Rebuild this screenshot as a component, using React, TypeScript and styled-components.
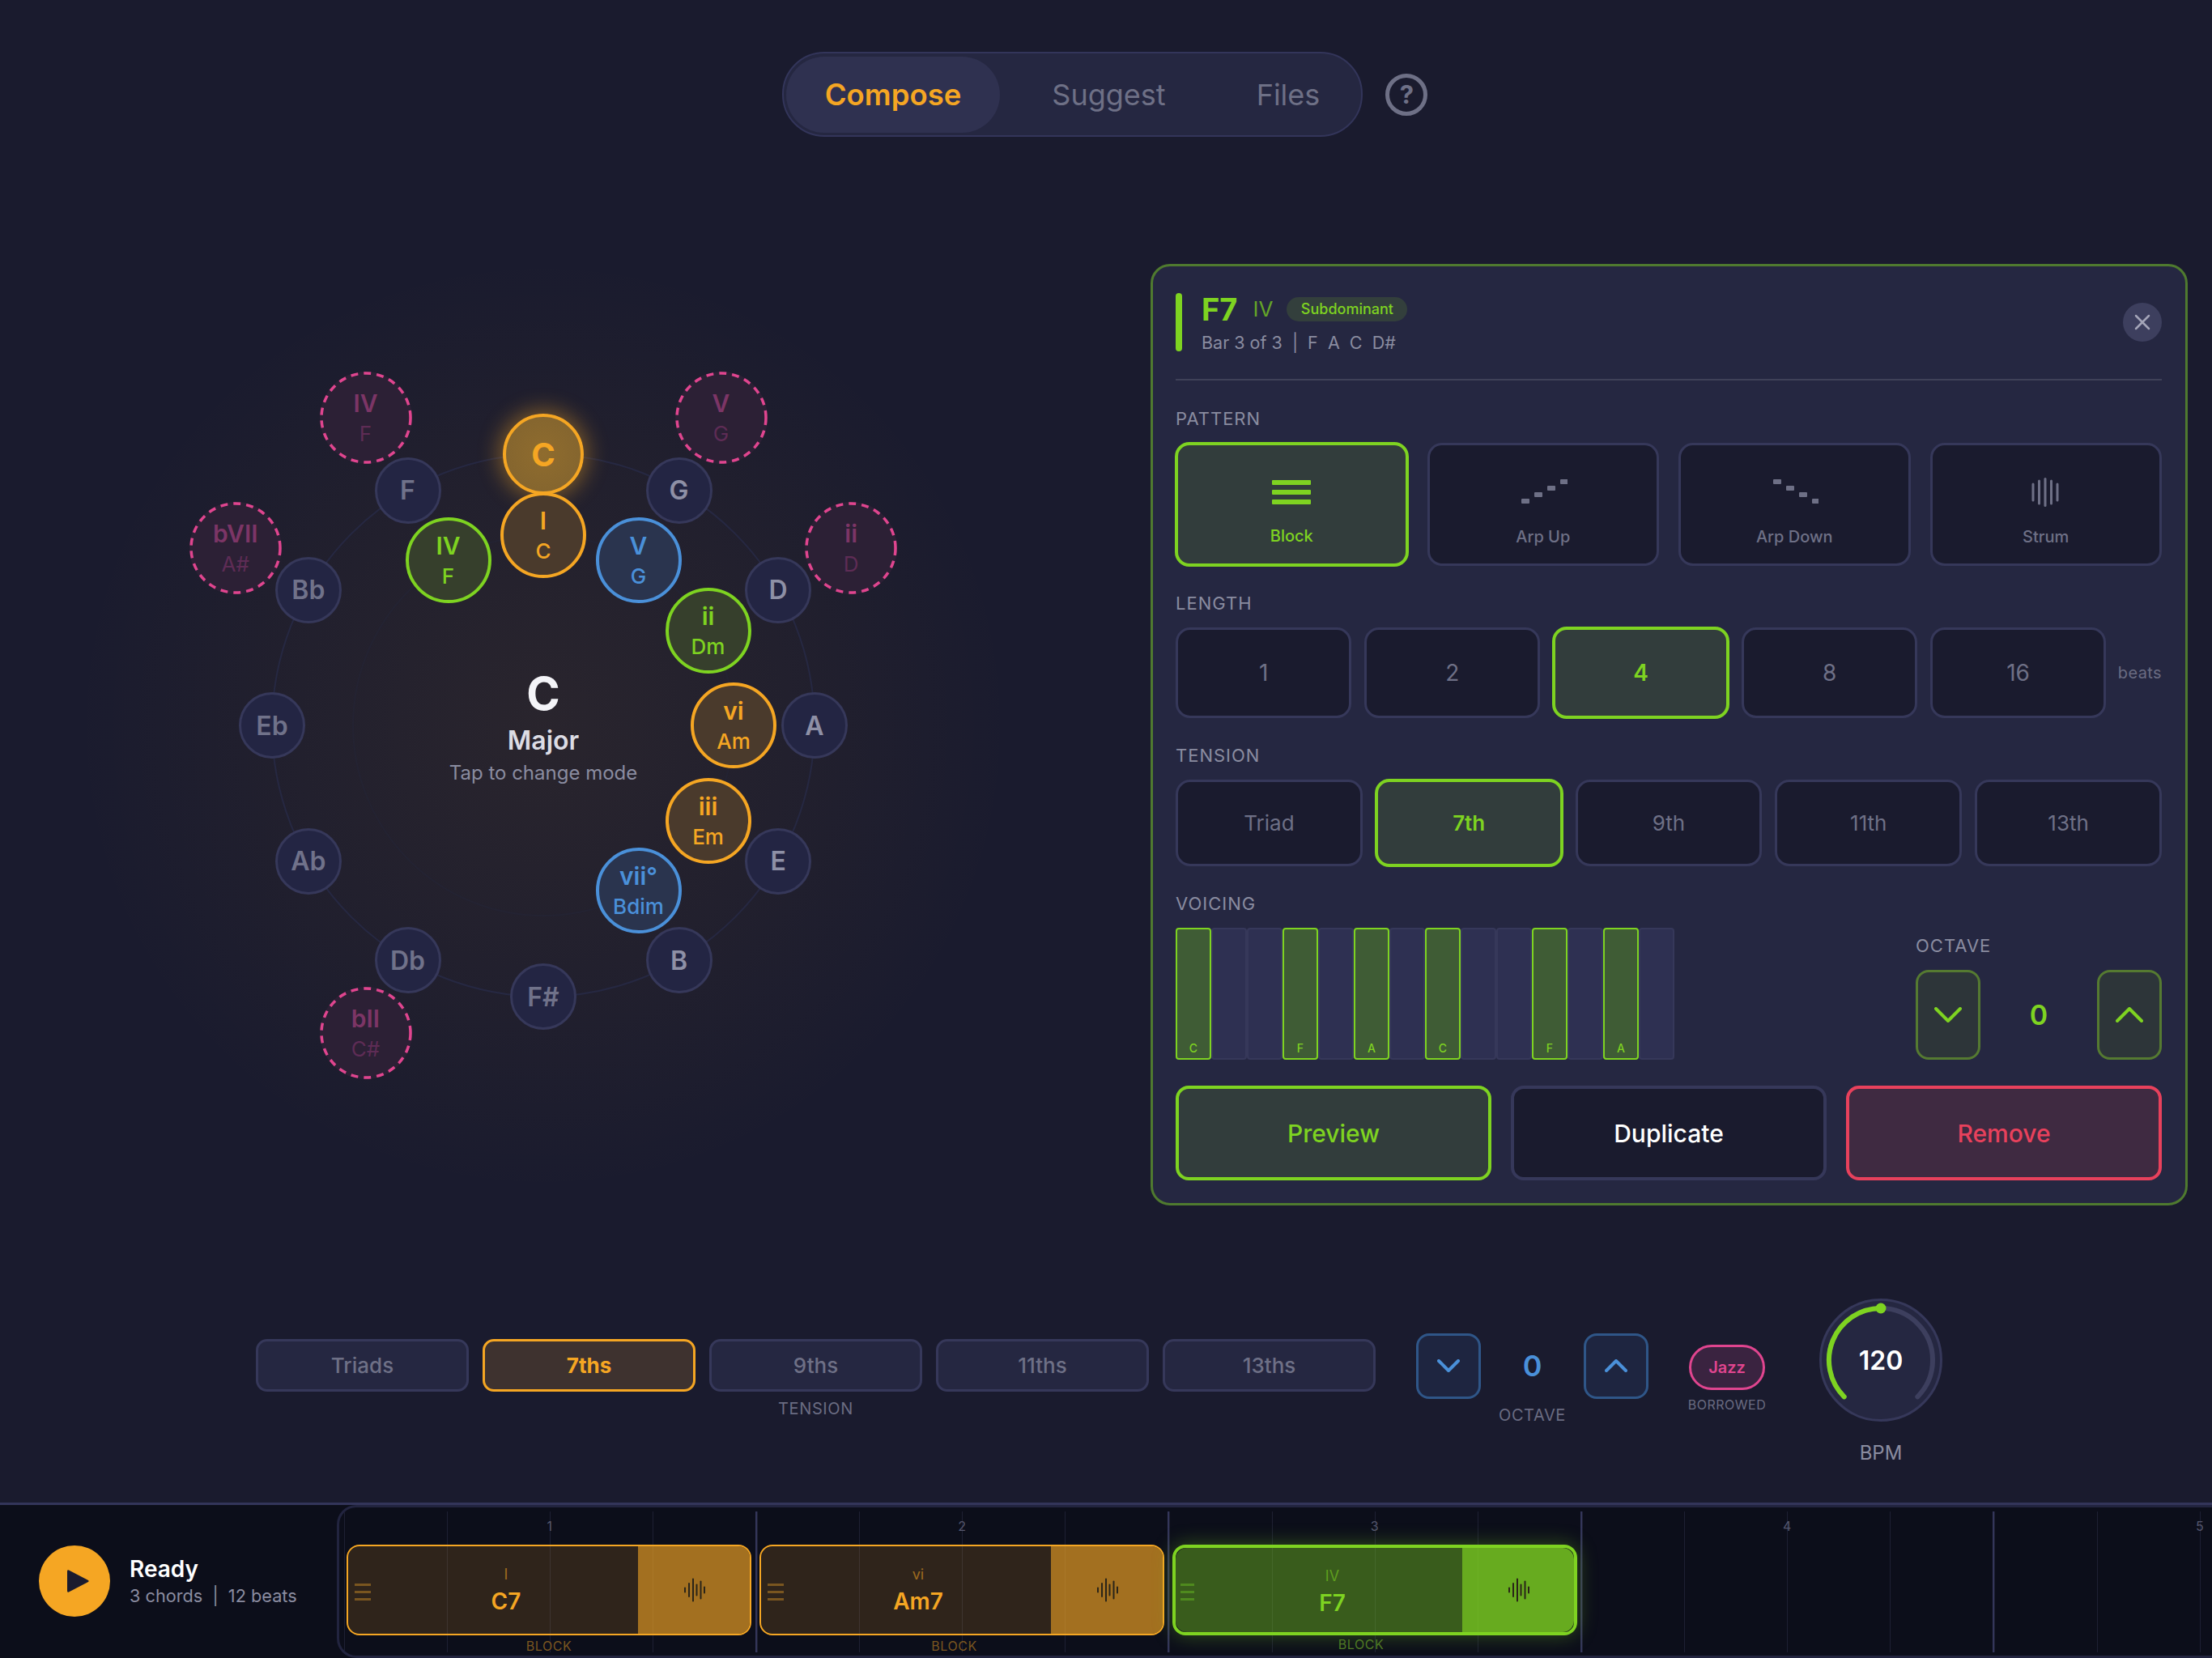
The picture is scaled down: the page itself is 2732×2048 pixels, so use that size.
import React from "react";
import styled, { createGlobalStyle } from "styled-components";

const GREEN = "#7ed321";
const AMBER = "#f5a623";
const BLUE = "#4a90d9";
const PINK = "#e0458f";
const RED = "#e8415c";
const FONT = `Inter, "Noto Sans", sans-serif`;

const Global = createGlobalStyle`
  html, body { margin: 0; padding: 0; background: #1a1b2e; }
  * { box-sizing: border-box; }
  body { font-family: ${FONT}; }
`;

const Page = styled.div`
  width: 2732px;
  height: 2048px;
  background: #1a1b2e;
  display: flex;
  flex-direction: column;
  overflow: hidden;
`;

/* ---------- top nav ---------- */
const Nav = styled.header`
  display: flex;
  justify-content: center;
  align-items: center;
  gap: 28px;
  padding-top: 64px;
  padding-right: 3px;
`;
const TabPill = styled.div`
  display: flex;
  align-items: center;
  gap: 16px;
  height: 105px;
  padding: 0 3px;
  background: #252741;
  border: 2px solid #33355a;
  border-radius: 52px;
`;
const Tab = styled.div<{ $active?: boolean }>`
  height: 94px;
  display: flex;
  align-items: center;
  padding: 0 48px;
  border-radius: 47px;
  font-size: ${(p) => (p.$active ? 36.5 : 36)}px;
  font-weight: ${(p) => (p.$active ? 600 : 400)};
  color: ${(p) => (p.$active ? AMBER : "#6e7086")};
  background: ${(p) => (p.$active ? "#2f3150" : "transparent")};
`;
const HelpButton = styled.div`
  width: 52px;
  height: 52px;
  border-radius: 50%;
  border: 5px solid #6e7086;
  color: #6e7086;
  display: flex;
  align-items: center;
  justify-content: center;
  font-size: 31px;
  font-weight: 700;
`;

/* ---------- main ---------- */
const Main = styled.main`
  display: flex;
  height: 1320px;
`;
const Wheel = styled.section`
  position: relative;
  flex: none;
  width: 1160px;
  height: 1160px;
  margin: 147px 0 0 91px;
  background: radial-gradient(circle closest-side, rgba(245, 166, 35, 0.07) 0%, rgba(245, 166, 35, 0.03) 60%, rgba(245, 166, 35, 0) 100%);
`;
const Rings = styled.svg`
  position: absolute;
  inset: 0;
`;
const Node = styled.div`
  position: absolute;
  transform: translate(-50%, -50%);
  border-radius: 50%;
  display: flex;
  flex-direction: column;
  align-items: center;
  justify-content: center;
`;
const NoteNode = styled(Node)<{ $bright?: boolean }>`
  width: 82px;
  height: 82px;
  background: #232543;
  border: 3px solid #36385a;
  font-size: 32px;
  font-weight: 600;
  color: ${(p) => (p.$bright ? "#8e90a6" : "#70728a")};
`;
const ActiveNote = styled(Node)`
  width: 100px;
  height: 100px;
  background: radial-gradient(circle, #8f6c2e 0%, #81632f 100%);
  border: 4px solid ${AMBER};
  box-shadow: 0 0 26px 5px rgba(245, 166, 35, 0.42);
  font-size: 40px;
  font-weight: 700;
  color: ${AMBER};
`;
const ChordNode = styled(Node)<{ $color: string; $bg: string }>`
  width: 106px;
  height: 106px;
  padding-top: 2px;
  background: ${(p) => p.$bg};
  border: 4px solid ${(p) => p.$color};
  color: ${(p) => p.$color};
  font-weight: 600;
`;
const Roman = styled.span`
  position: relative;
  font-size: 30px;
  line-height: 38px;
`;
const ChordName = styled.span`
  position: relative;
  font-size: 26px;
  line-height: 38px;
  font-weight: 500;
`;
const BorrowedNode = styled(Node)`
  width: 114px;
  height: 114px;
  padding-top: 2px;
  background: #2c2035;
  font-weight: 600;
  color: #7c3566;
`;
const DashRing = styled.svg`
  position: absolute;
  inset: 0;
`;
const BorrowedName = styled(ChordName)`
  color: #5e2c55;
  font-weight: 400;
`;
const Center = styled.div`
  position: absolute;
  left: 50%;
  top: 0;
  transform: translateX(-50%);
  margin-top: 507px;
  display: flex;
  flex-direction: column;
  align-items: center;
  white-space: nowrap;
`;
const CenterKey = styled.div`
  font-size: 56px;
  font-weight: 700;
  line-height: 68px;
  color: #f4f4f8;
`;
const CenterMode = styled.div`
  font-size: 32px;
  font-weight: 600;
  line-height: 40px;
  margin-top: 4px;
  color: #dcdce4;
`;
const CenterHint = styled.div`
  font-size: 24px;
  line-height: 30px;
  margin-top: 5px;
  color: #8a8ca0;
`;

/* ---------- detail panel ---------- */
const Panel = styled.aside`
  flex: none;
  margin: 157px 30px 0 auto;
  width: 1281px;
  height: 1163px;
  background: #252741;
  border: 3px solid #4f7a2f;
  border-radius: 24px;
  padding: 33px 29px 28px 28px;
`;
const PanelHeader = styled.div`
  display: flex;
  align-items: center;
  height: 72px;
`;
const Accent = styled.div`
  width: 8px;
  height: 72px;
  border-radius: 4px;
  background: ${GREEN};
  margin-right: 24px;
`;
const TitleCol = styled.div`
  display: flex;
  flex-direction: column;
  padding-top: 3px;
`;
const TitleRow = styled.div`
  display: flex;
  align-items: center;
  height: 40px;
`;
const Title = styled.span`
  font-size: 38px;
  font-weight: 700;
  color: ${GREEN};
`;
const TitleRoman = styled.span`
  font-size: 26px;
  color: #64a528;
  margin-left: 19px;
`;
const Badge = styled.span`
  margin-left: 17px;
  height: 30px;
  padding: 0 17.5px;
  border-radius: 15px;
  background: #333f3c;
  color: ${GREEN};
  font-size: 18px;
  font-weight: 500;
  display: flex;
  align-items: center;
`;
const Subtitle = styled.div`
  margin-top: 6px;
  line-height: 30px;
  font-size: 21.5px;
  color: #8a8ca0;
  white-space: pre;
`;
const Close = styled.div`
  margin-left: auto;
  width: 48px;
  height: 48px;
  border-radius: 50%;
  background: #3d3f5e;
  display: flex;
  align-items: center;
  justify-content: center;
`;
const Divider = styled.div`
  height: 2px;
  margin-top: 34px;
  background: #3f4158;
`;
const Section = styled.section`
  margin-top: 32px;
`;
const FirstSection = styled(Section)`
  margin-top: 33px;
`;
const Label = styled.div`
  font-size: 22px;
  line-height: 28px;
  font-weight: 400;
  letter-spacing: 1px;
  color: #8a8ca0;
  margin-bottom: 16px;
`;
const PatternGrid = styled.div`
  display: grid;
  grid-template-columns: repeat(4, 1fr);
  gap: 24px;
`;
const OptionButton = styled.div<{ $active?: boolean; $h: number }>`
  height: ${(p) => (p.$active ? p.$h + 2 : p.$h)}px;
  margin: ${(p) => (p.$active ? -1 : 0)}px;
  display: flex;
  align-items: center;
  justify-content: center;
  border-radius: 18px;
  background: ${(p) => (p.$active ? "#323d3c" : "#1a1b2e")};
  border: ${(p) => (p.$active ? `4px solid ${GREEN}` : "3px solid #36385a")};
  color: ${(p) => (p.$active ? GREEN : "#6e7086")};
  font-size: 26px;
  font-weight: ${(p) => (p.$active ? 600 : 400)};
`;
const PatternButton = styled(OptionButton)`
  flex-direction: column;
  justify-content: flex-start;
  padding-top: ${(p) => (p.$active ? 37 : 38)}px;
`;
const PatternIcon = styled.svg`
  display: block;
  width: 60px;
  height: 44px;
`;
const PatternName = styled.div`
  margin-top: 18px;
  font-size: 20px;
  line-height: 26px;
  font-weight: 500;
`;
const LengthRow = styled.div`
  display: flex;
  align-items: center;
  gap: 15.5px;
`;
const LengthButton = styled(OptionButton)`
  width: ${(p) => (p.$active ? 219.5 : 217.5)}px;
  font-size: 28px;
`;
const BeatsHint = styled.span`
  font-size: 20px;
  color: #6a6c82;
  margin-left: -1px;
  letter-spacing: 0.4px;
`;
const TensionRow = styled.div`
  display: grid;
  grid-template-columns: repeat(5, 1fr);
  gap: 16px;
`;
const VoicingRow = styled.div`
  display: flex;
  justify-content: space-between;
  align-items: flex-end;
`;
const Keys = styled.div`
  display: flex;
  height: 163px;
`;
const Key = styled.div<{ $on?: boolean }>`
  width: 44px;
  height: 100%;
  display: flex;
  align-items: flex-end;
  justify-content: center;
  padding-bottom: 4px;
  border-radius: 4px;
  background: ${(p) => (p.$on ? "#3f5c35" : "#2e3052")};
  border: 2px solid ${(p) => (p.$on ? GREEN : "#36385a")};
  color: ${GREEN};
  font-size: 14px;
  font-weight: 500;
`;
const OctaveCol = styled.div`
  width: 304px;
`;
const Stepper = styled.div`
  display: flex;
  align-items: center;
  justify-content: space-between;
`;
const StepButton = styled.div<{ $color: string; $bg: string; $h: number }>`
  width: 80px;
  height: ${(p) => p.$h}px;
  border-radius: 16px;
  border: 3px solid ${(p) => p.$color};
  background: ${(p) => p.$bg};
  display: flex;
  align-items: center;
  justify-content: center;
`;
const StepValue = styled.span<{ $color: string; $size: number }>`
  font-size: ${(p) => p.$size}px;
  font-weight: 600;
  color: ${(p) => p.$color};
`;
const Actions = styled.div`
  margin-top: 32px;
  display: grid;
  grid-template-columns: repeat(3, 1fr);
  gap: 24px;
`;
const ActionButton = styled.div<{ $border: string; $bg: string; $color: string }>`
  height: 117px;
  display: flex;
  align-items: center;
  justify-content: center;
  border-radius: 16px;
  border: 4px solid ${(p) => p.$border};
  background: ${(p) => p.$bg};
  color: ${(p) => p.$color};
  font-size: 30px;
  font-weight: 500;
`;

/* ---------- lower controls ---------- */
const Controls = styled.div`
  height: 367px;
  padding: 61px 0 0 316px;
  display: flex;
  align-items: center;
`;
const ControlGroup = styled.div`
  display: flex;
  flex-direction: column;
  align-items: center;
`;
const ChipRow = styled.div`
  display: flex;
  gap: 17px;
`;
const Chip = styled.div<{ $active?: boolean }>`
  width: 263px;
  height: 65px;
  display: flex;
  align-items: center;
  justify-content: center;
  border-radius: 14px;
  background: ${(p) => (p.$active ? "#3e322f" : "#252741")};
  border: 3px solid ${(p) => (p.$active ? AMBER : "#36385a")};
  color: ${(p) => (p.$active ? AMBER : "#6e7086")};
  font-size: 26px;
  font-weight: ${(p) => (p.$active ? 700 : 500)};
`;
const SmallLabel = styled.div<{ $top: number }>`
  margin-top: ${(p) => p.$top}px;
  font-size: 20px;
  line-height: 24px;
  letter-spacing: 0.6px;
  color: #6a6c82;
`;
const OctaveGroup = styled(ControlGroup)`
  width: 287px;
  margin-left: 50px;
`;
const StepperWide = styled(Stepper)`
  width: 100%;
`;
const BorrowedGroup = styled(ControlGroup)`
  margin-left: 49px;
  width: 96px;
`;
const JazzPill = styled.div`
  width: 94px;
  height: 56px;
  border-radius: 28px;
  border: 3px solid ${PINK};
  background: #3a2340;
  color: ${PINK};
  font-size: 20px;
  font-weight: 600;
  display: flex;
  align-items: center;
  justify-content: center;
`;
const TinyLabel = styled.div`
  margin-top: 8px;
  font-size: 16px;
  line-height: 20px;
  letter-spacing: 0.5px;
  color: #6a6c82;
`;
const BpmGroup = styled(ControlGroup)`
  margin-left: 66px;
  width: 152px;
  padding-top: 8px;
`;
const BpmDial = styled.div`
  position: relative;
  width: 152px;
  height: 152px;
  border-radius: 50%;
  background: #252741;
  border: 3px solid #36385a;
  display: flex;
  align-items: center;
  justify-content: center;
  font-size: 32px;
  font-weight: 600;
  color: #fff;
`;
const BpmArc = styled.svg`
  position: absolute;
  left: -3px;
  top: -3px;
  overflow: visible;
`;
const BpmLabel = styled.div`
  margin-top: 24px;
  font-size: 24px;
  line-height: 30px;
  color: #8a8ca0;
`;

/* ---------- timeline ---------- */
const Bar = styled.footer`
  flex: none;
  height: 192px;
  display: flex;
  background: #0c0e1a;
  border-top: 3px solid #33355a;
`;
const Transport = styled.div`
  flex: none;
  width: 416px;
  display: flex;
  align-items: center;
  gap: 25px;
  padding: 0 0 2px 48px;
`;
const PlayButton = styled.div`
  width: 88px;
  height: 88px;
  border-radius: 50%;
  background: ${AMBER};
  display: flex;
  align-items: center;
  justify-content: center;
  padding-left: 8px;
`;
const StatusTitle = styled.div`
  font-size: 28px;
  font-weight: 600;
  line-height: 34px;
  color: #fff;
  margin-left: -1px;
`;
const StatusText = styled.div`
  font-size: 21.7px;
  line-height: 28px;
  margin: 2px 0 0 -1px;
  color: #8a8ca0;
  white-space: pre;
`;
const Track = styled.div`
  position: relative;
  flex: 1;
  overflow: hidden;
  border: 3px solid #22243f;
  border-right: none;
  border-radius: 24px 0 0 24px;
`;
const Grid = styled.div`
  position: absolute;
  left: 6px;
  top: 5px;
  bottom: 4px;
  display: flex;
`;
const GridBar = styled.div`
  position: relative;
  flex: none;
  width: 509.5px;
  display: grid;
  grid-template-columns: repeat(4, 1fr);
  border-right: 2px solid #34365a;
`;
const GridBeat = styled.div`
  border-left: 1px solid #1e2033;
`;
const BarNumber = styled.div`
  position: absolute;
  top: 8px;
  left: 0;
  right: 0;
  text-align: center;
  font-size: 16px;
  line-height: 20px;
  color: #55576e;
`;
const Lane = styled.div`
  position: relative;
  display: flex;
  gap: 10px;
  padding: 46px 0 0 9px;
`;
const Clip = styled.div<{ $rgb: string; $selected?: boolean }>`
  position: relative;
  flex: none;
  width: 500px;
  height: 112px;
  display: flex;
  border-radius: 16px;
  border: ${(p) => (p.$selected ? 4 : 2)}px solid rgb(${(p) => p.$rgb});
  box-shadow: ${(p) => (p.$selected ? `0 0 24px rgba(${p.$rgb}, 0.35)` : "none")};
  color: rgb(${(p) => p.$rgb});
`;
const ClipMain = styled.div<{ $rgb: string; $selected?: boolean }>`
  flex: 1;
  display: flex;
  border-radius: 14px 0 0 14px;
  background: rgba(${(p) => p.$rgb}, ${(p) => (p.$selected ? 0.4 : 0.15)});
`;
const Handle = styled.div<{ $color: string; $w: number }>`
  flex: none;
  width: ${(p) => p.$w}px;
  margin: 0 0 0 ${(p) => (p.$w === 20 ? 8 : 6)}px;
  align-self: center;
  display: flex;
  flex-direction: column;
  gap: 6px;
  padding-top: 4px;
  span {
    display: block;
    height: 3px;
    background: ${(p) => p.$color};
  }
`;
const ClipBody = styled.div<{ $offset: number }>`
  flex: 1;
  display: flex;
  flex-direction: column;
  align-items: center;
  padding: 23px 0 0 ${(p) => p.$offset}px;
`;
const ClipRoman = styled.div`
  font-size: 18px;
  line-height: 24px;
  opacity: 0.55;
`;
const ClipName = styled.div`
  font-size: 28px;
  font-weight: 600;
  line-height: 34px;
  margin-top: 4px;
`;
const ClipTail = styled.div<{ $rgb: string; $selected?: boolean }>`
  flex: none;
  width: 138px;
  padding-left: 2px;
  display: flex;
  align-items: center;
  justify-content: center;
  border-radius: 0 14px 14px 0;
  background: rgba(${(p) => p.$rgb}, ${(p) => (p.$selected ? 0.8 : 0.65)});
`;
const ClipMode = styled.div<{ $dim: string; $shift: number }>`
  position: absolute;
  left: 0;
  right: ${(p) => p.$shift}px;
  bottom: -25px;
  text-align: center;
  font-size: 16px;
  line-height: 20px;
  letter-spacing: 0.6px;
  color: ${(p) => p.$dim};
`;

/* ---------- drawings ---------- */
const Chevron = ({ up, color, w = 30 }: { up?: boolean; color: string; w?: number }) => (
  <svg width={w + 4} height={w / 2 + 4} viewBox={`0 0 ${w + 4} ${w / 2 + 4}`} fill="none">
    <path
      d={up ? `M2 ${w / 2 + 2} L${w / 2 + 2} 2 L${w + 2} ${w / 2 + 2}` : `M2 2 L${w / 2 + 2} ${w / 2 + 2} L${w + 2} 2`}
      stroke={color}
      strokeWidth={4}
      strokeLinecap="round"
      strokeLinejoin="round"
    />
  </svg>
);

const Wave = () => (
  <svg width="28" height="30" viewBox="0 0 28 30">
    {[
      [2, 7],
      [7, 18],
      [12, 29],
      [16.5, 15],
      [21.5, 23],
      [26, 9],
    ].map(([x, h]) => (
      <rect key={x} x={x - 1} y={15 - h / 2} width="2" height={h} rx="1" fill="#2a2418" />
    ))}
  </svg>
);

const polar = (r: number, deg: number) => {
  const a = (deg * Math.PI) / 180;
  return { left: 580 + r * Math.sin(a), top: 580 - r * Math.cos(a) };
};

const NOTES: [string, boolean][] = [
  ["C", true],
  ["G", true],
  ["D", true],
  ["A", true],
  ["E", true],
  ["B", true],
  ["F#", false],
  ["Db", false],
  ["Ab", false],
  ["Eb", false],
  ["Bb", false],
  ["F", false],
];

const GB = "#363f2c";
const AB = "#4a3a2c";
const BB = "#2a344e";
const CHORDS = [
  { deg: 30, r: "V", n: "G", c: BLUE, b: BB },
  { deg: 60, r: "ii", n: "Dm", c: GREEN, b: GB },
  { deg: 90, r: "vi", n: "Am", c: AMBER, b: AB },
  { deg: 120, r: "iii", n: "Em", c: AMBER, b: AB },
  { deg: 150, r: "vii°", n: "Bdim", c: BLUE, b: BB },
  { deg: -30, r: "IV", n: "F", c: GREEN, b: GB },
  { deg: 0, r: "I", n: "C", c: AMBER, b: AB },
];
const BORROWED = [
  { deg: -30, r: "IV", n: "F" },
  { deg: 30, r: "V", n: "G" },
  { deg: 60, r: "ii", n: "D" },
  { deg: -60, r: "bVII", n: "A#" },
  { deg: 210, r: "bII", n: "C#" },
];

const CLIPS = [
  { roman: "I", name: "C7", rgb: "245,166,35", bars: "#7a5620", dim: "#7a5620", shift: 0, offset: 4 },
  { roman: "vi", name: "Am7", rgb: "245,166,35", bars: "#7a5620", dim: "#7a5620", shift: 19, offset: 2 },
  { roman: "IV", name: "F7", rgb: "126,211,33", bars: "#4f8a1e", dim: "#4f7a24", shift: 34, offset: 10, selected: true },
];

const KEYS = ["C", "", "", "F", "", "A", "", "C", "", "", "F", "", "A", ""];

export default function App() {
  return (
    <Page>
      <Global />
      <Nav>
        <TabPill>
          <Tab $active>Compose</Tab>
          <Tab>Suggest</Tab>
          <Tab>Files</Tab>
        </TabPill>
        <HelpButton>?</HelpButton>
      </Nav>

      <Main>
        <Wheel>
          <Rings width="1160" height="1160" fill="none">
            <circle cx="580" cy="580" r="335" stroke="#262842" strokeWidth="2" />
            <circle cx="580" cy="580" r="235" stroke="#25273f" strokeOpacity="0.3" strokeWidth="2" />
          </Rings>
          {NOTES.map(([name, bright], i) =>
            i === 0 ? (
              <ActiveNote key={name} style={polar(335, 0)}>
                {name}
              </ActiveNote>
            ) : (
              <NoteNode key={name} $bright={bright} style={polar(335, i * 30)}>
                {name}
              </NoteNode>
            )
          )}
          {BORROWED.map((b) => (
            <BorrowedNode key={b.r} style={polar(439, b.deg)}>
              <DashRing width="114" height="114" fill="none">
                <circle cx="57" cy="57" r="55" stroke={PINK} strokeWidth="3.5" strokeDasharray="9 7" />
              </DashRing>
              <Roman>{b.r}</Roman>
              <BorrowedName>{b.n}</BorrowedName>
            </BorrowedNode>
          ))}
          {CHORDS.map((c) => (
            <ChordNode key={c.r} $color={c.c} $bg={c.b} style={polar(235, c.deg)}>
              <Roman>{c.r}</Roman>
              <ChordName>{c.n}</ChordName>
            </ChordNode>
          ))}
          <Center>
            <CenterKey>C</CenterKey>
            <CenterMode>Major</CenterMode>
            <CenterHint>Tap to change mode</CenterHint>
          </Center>
        </Wheel>

        <Panel>
          <PanelHeader>
            <Accent />
            <TitleCol>
              <TitleRow>
                <Title>F7</Title>
                <TitleRoman>IV</TitleRoman>
                <Badge>Subdominant</Badge>
              </TitleRow>
              <Subtitle>Bar 3 of 3  |  F  A  C  D#</Subtitle>
            </TitleCol>
            <Close>
              <svg width="20" height="20" viewBox="0 0 20 20" fill="none">
                <path d="M2 2 L18 18 M18 2 L2 18" stroke="#a4a5b8" strokeWidth="2.5" strokeLinecap="round" />
              </svg>
            </Close>
          </PanelHeader>
          <Divider />

          <FirstSection>
            <Label>PATTERN</Label>
            <PatternGrid>
              <PatternButton $active $h={152}>
                <PatternIcon viewBox="0 0 60 44">
                  <rect x="6" y="6" width="48" height="6" rx="1" fill={GREEN} />
                  <rect x="6" y="18" width="48" height="6" rx="1" fill={GREEN} />
                  <rect x="6" y="30" width="48" height="6" rx="1" fill={GREEN} />
                </PatternIcon>
                <PatternName>Block</PatternName>
              </PatternButton>
              <PatternButton $h={152}>
                <PatternIcon viewBox="0 0 60 44">
                  {[0, 1, 2, 3].map((i) => (
                    <rect key={i} x={3 + i * 16} y={28 - i * 8} width="10" height="6" rx="1" fill="#6e7086" />
                  ))}
                </PatternIcon>
                <PatternName>Arp Up</PatternName>
              </PatternButton>
              <PatternButton $h={152}>
                <PatternIcon viewBox="0 0 60 44">
                  {[0, 1, 2, 3].map((i) => (
                    <rect key={i} x={4 + i * 16} y={4 + i * 8} width="10" height="6" rx="1" fill="#6e7086" />
                  ))}
                </PatternIcon>
                <PatternName>Arp Down</PatternName>
              </PatternButton>
              <PatternButton $h={152}>
                <PatternIcon viewBox="0 0 60 44">
                  {[23, 31, 36, 31, 23].map((h, i) => (
                    <rect key={i} x={12.5 + i * 7.5} y={20 - h / 2} width="3" height={h} rx="1.5" fill="#6e7086" />
                  ))}
                </PatternIcon>
                <PatternName>Strum</PatternName>
              </PatternButton>
            </PatternGrid>
          </FirstSection>

          <Section>
            <Label>LENGTH</Label>
            <LengthRow>
              {[1, 2, 4, 8, 16].map((n) => (
                <LengthButton key={n} $h={112} $active={n === 4}>
                  {n}
                </LengthButton>
              ))}
              <BeatsHint>beats</BeatsHint>
            </LengthRow>
          </Section>

          <Section>
            <Label>TENSION</Label>
            <TensionRow>
              {["Triad", "7th", "9th", "11th", "13th"].map((t) => (
                <OptionButton key={t} $h={107} $active={t === "7th"}>
                  {t}
                </OptionButton>
              ))}
            </TensionRow>
          </Section>

          <Section>
            <VoicingRow>
              <div>
                <Label>VOICING</Label>
                <Keys>
                  {KEYS.map((k, i) => (
                    <Key key={i} $on={!!k}>
                      {k}
                    </Key>
                  ))}
                </Keys>
              </div>
              <OctaveCol>
                <Label>OCTAVE</Label>
                <Stepper>
                  <StepButton $color="#557a31" $bg="#2d3539" $h={111}>
                    <Chevron color={GREEN} />
                  </StepButton>
                  <StepValue $color={GREEN} $size={34}>
                    0
                  </StepValue>
                  <StepButton $color="#557a31" $bg="#2d3539" $h={111}>
                    <Chevron up color={GREEN} />
                  </StepButton>
                </Stepper>
              </OctaveCol>
            </VoicingRow>
          </Section>

          <Actions>
            <ActionButton $border={GREEN} $bg="#323d3c" $color={GREEN}>
              Preview
            </ActionButton>
            <ActionButton $border="#36385a" $bg="#1a1b2e" $color="#ffffff">
              Duplicate
            </ActionButton>
            <ActionButton $border={RED} $bg="#3f2a41" $color={RED}>
              Remove
            </ActionButton>
          </Actions>
        </Panel>
      </Main>

      <Controls>
        <ControlGroup>
          <ChipRow>
            {["Triads", "7ths", "9ths", "11ths", "13ths"].map((t) => (
              <Chip key={t} $active={t === "7ths"}>
                {t}
              </Chip>
            ))}
          </ChipRow>
          <SmallLabel $top={9}>TENSION</SmallLabel>
        </ControlGroup>

        <OctaveGroup>
          <StepperWide>
            <StepButton $color="#2f5688" $bg="#1e2540" $h={81}>
              <Chevron color={BLUE} w={24} />
            </StepButton>
            <StepValue $color={BLUE} $size={36}>
              0
            </StepValue>
            <StepButton $color="#2f5688" $bg="#1e2540" $h={81}>
              <Chevron up color={BLUE} w={24} />
            </StepButton>
          </StepperWide>
          <SmallLabel $top={8}>OCTAVE</SmallLabel>
        </OctaveGroup>

        <BorrowedGroup>
          <JazzPill>Jazz</JazzPill>
          <TinyLabel>BORROWED</TinyLabel>
        </BorrowedGroup>

        <BpmGroup>
          <BpmDial>
            <BpmArc width="152" height="152" viewBox="0 0 152 152" fill="none">
              <path d="M30.7 121.3 A64 64 0 1 1 121.3 121.3" stroke="#3d3f5e" strokeWidth="6" strokeLinecap="round" />
              <path d="M30.7 121.3 A64 64 0 0 1 76 12" stroke={GREEN} strokeWidth="6" strokeLinecap="round" />
              <circle cx="76" cy="12" r="6.5" fill={GREEN} />
            </BpmArc>
            120
          </BpmDial>
          <BpmLabel>BPM</BpmLabel>
        </BpmGroup>
      </Controls>

      <Bar>
        <Transport>
          <PlayButton>
            <svg width="30" height="32" viewBox="0 0 30 32">
              <path d="M4 2.5 L28 15 Q29.5 16 28 17 L4 29.5 Q2 30.5 2 28 L2 4 Q2 1.5 4 2.5 Z" fill="#1a1b2e" />
            </svg>
          </PlayButton>
          <div>
            <StatusTitle>Ready</StatusTitle>
            <StatusText>3 chords  |  12 beats</StatusText>
          </div>
        </Transport>
        <Track>
          <Grid>
            {[1, 2, 3, 4, 5].map((n) => (
              <GridBar key={n}>
                <GridBeat />
                <GridBeat />
                <GridBeat />
                <GridBeat />
                <BarNumber>{n}</BarNumber>
              </GridBar>
            ))}
          </Grid>
          <Lane>
            {CLIPS.map((c) => (
              <Clip key={c.name} $rgb={c.rgb} $selected={c.selected}>
                <ClipMain $rgb={c.rgb} $selected={c.selected}>
                  <Handle $color={c.bars} $w={c.selected ? 17 : 20}>
                    <span />
                    <span />
                    <span />
                  </Handle>
                  <ClipBody $offset={c.offset}>
                    <ClipRoman>{c.roman}</ClipRoman>
                    <ClipName>{c.name}</ClipName>
                  </ClipBody>
                </ClipMain>
                <ClipTail $rgb={c.rgb} $selected={c.selected}>
                  <Wave />
                </ClipTail>
                <ClipMode $dim={c.dim} $shift={c.shift}>
                  BLOCK
                </ClipMode>
              </Clip>
            ))}
          </Lane>
        </Track>
      </Bar>
    </Page>
  );
}
